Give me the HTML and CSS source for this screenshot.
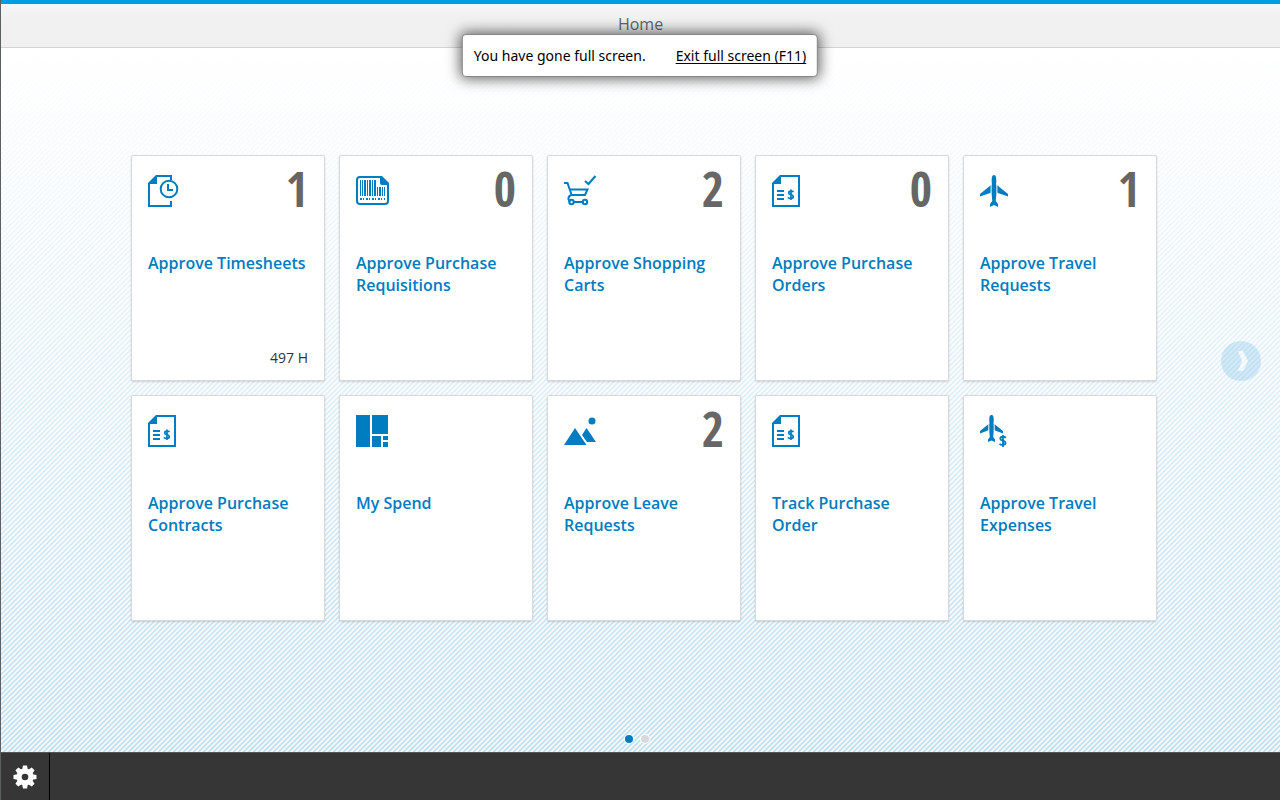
FILE: index.html
```html
<!DOCTYPE html>
<html lang="en">
<head>
<meta charset="utf-8">
<meta name="viewport" content="width=device-width, initial-scale=1">
<title>Home</title>
<link rel="stylesheet" href="styles.css">
</head>
<body>
<svg class="sprite" aria-hidden="true">
  <defs>
    <symbol id="icon-order" viewBox="0 0 34 34">
      <path d="M9 1H27V31H1V9" fill="none" stroke="currentColor" stroke-width="2"/>
      <path d="M0 9V8L8 0H9V9Z M5 15h7v2H5z M5 19h7v2H5z M5 23h7v2H5z" fill="currentColor"/>
      <path d="M21.500 17C20.500 15.800 16.700 15.700 16.700 18C16.700 20.300 21.300 19 21.300 21.700C21.300 24 17 23.800 16 22.400M19 14.500V25" fill="none" stroke="currentColor" stroke-width="1.700"/>
    </symbol>
    <symbol id="icon-plane" viewBox="0 0 34 34">
      <path d="M14 0C12 0 11.700 3 11.700 5V9.500L0 19V21.500L11.500 17.500L12.300 26L10 29V32L14 30L18 32V29L15.700 26L16.500 17.500L28 21.500V19L16.300 9.500V5C16.300 3 16 0 14 0Z" fill="currentColor"/>
      <path d="M11.100 8V18M16.900 8V18" stroke="#fff" stroke-width="1"/>
    </symbol>
  </defs>
</svg>

<header class="shell-header"><h1 class="shell-title">Home</h1></header>

<div class="notice" role="status">
  <span>You have gone full screen.</span>
  <a class="notice-link" href="#">Exit full screen (F11)</a>
</div>

<main class="launchpad">
  <div class="tiles">
    <a class="tile" href="#">
      <span class="tile-top">
        <svg class="icon" viewBox="0 0 34 34"><path d="M9 1H23V5M23 26V31H1V9" fill="none" stroke="currentColor" stroke-width="2"/><path d="M0 9V8L8 0H9V9Z" fill="currentColor"/><circle cx="21" cy="14" r="8.300" fill="#fff" stroke="currentColor" stroke-width="2"/><path d="M20 9V15H25" fill="none" stroke="currentColor" stroke-width="2"/></svg>
        <span class="count">1</span>
      </span>
      <span class="tile-title">Approve Timesheets</span>
      <span class="tile-info">497 H</span>
    </a>
    <a class="tile" href="#">
      <span class="tile-top">
        <svg class="icon" viewBox="0 0 34 34"><path d="M4 2H25L32 9V26Q32 29 29 29H4Q1 29 1 26V5Q1 2 4 2Z" fill="none" stroke="currentColor" stroke-width="2"/><path d="M24 1H26L33 8V10H26Q24 10 24 8Z M4 5h1v16h-1z M6 5h1v16h-1z M8 5h2v16h-2z M11 5h1v16h-1z M13 5h2v16h-2z M16 5h1v16h-1z M18 5h2v16h-2z M21 12h1v9h-1z M23 12h2v9h-2z M26 12h1v9h-1z M28 12h1v9h-1z" fill="currentColor"/><path d="M4 24H29" stroke="currentColor" stroke-width="2" stroke-dasharray="2 1 1 2"/></svg>
        <span class="count">0</span>
      </span>
      <span class="tile-title">Approve Purchase Requisitions</span>
    </a>
    <a class="tile" href="#">
      <span class="tile-top">
        <svg class="icon" viewBox="0 0 34 34"><path d="M0 8H3.500L8 21M5.500 14.500H23.500L21 20H7.500Q4 21 4.500 24.500L6 27" fill="none" stroke="currentColor" stroke-width="2"/><path d="M10 27H18M21 6L24.500 9L31.500 1" fill="none" stroke="currentColor" stroke-width="2"/><circle cx="7.500" cy="27" r="2.200" fill="none" stroke="currentColor" stroke-width="2"/><circle cx="21" cy="27" r="2.200" fill="none" stroke="currentColor" stroke-width="2"/></svg>
        <span class="count">2</span>
      </span>
      <span class="tile-title">Approve Shopping Carts</span>
    </a>
    <a class="tile" href="#">
      <span class="tile-top">
        <svg class="icon"><use href="#icon-order"/></svg>
        <span class="count">0</span>
      </span>
      <span class="tile-title">Approve Purchase Orders</span>
    </a>
    <a class="tile" href="#">
      <span class="tile-top">
        <svg class="icon"><use href="#icon-plane"/></svg>
        <span class="count">1</span>
      </span>
      <span class="tile-title">Approve Travel Requests</span>
    </a>
    <a class="tile" href="#">
      <span class="tile-top">
        <svg class="icon"><use href="#icon-order"/></svg>
      </span>
      <span class="tile-title">Approve Purchase Contracts</span>
    </a>
    <a class="tile" href="#">
      <span class="tile-top">
        <svg class="icon" viewBox="0 0 34 34"><path d="M0 0h14v32H0z M16 0h16v19H16z M16 21h9v11h-9z M27 21h5v4h-5z M27 27h5v5h-5z" fill="currentColor"/></svg>
      </span>
      <span class="tile-title">My Spend</span>
    </a>
    <a class="tile" href="#">
      <span class="tile-top">
        <svg class="icon" viewBox="0 0 34 34"><path d="M0 30L11 13L22.500 30Z M18 20L22.500 13L32 27H23Z" fill="currentColor"/><circle cx="28" cy="6" r="3.500" fill="currentColor"/></svg>
        <span class="count">2</span>
      </span>
      <span class="tile-title">Approve Leave Requests</span>
    </a>
    <a class="tile" href="#">
      <span class="tile-top">
        <svg class="icon"><use href="#icon-order"/></svg>
      </span>
      <span class="tile-title">Track Purchase Order</span>
    </a>
    <a class="tile" href="#">
      <span class="tile-top">
        <svg class="icon" viewBox="0 0 34 34"><path d="M11.500 0C9.700 0 9.300 2 9.300 4V8.500L0 16V18.500L9.200 15L9.800 22L8 24.500V27L11.500 25.500L15 27V24.500L13.200 22L13.800 15L23 18.500V16L13.700 8.500V4C13.700 2 13.300 0 11.500 0Z" fill="currentColor"/><path d="M8.800 7V16M14.200 7V16" stroke="#fff" stroke-width="1"/><path d="M25.800 22.800C24.500 21.300 20.300 21.200 20.300 23.700C20.300 26.300 25.500 25 25.500 28C25.500 30.500 20.800 30.300 19.500 28.700M23 20V32" fill="none" stroke="currentColor" stroke-width="1.800"/></svg>
      </span>
      <span class="tile-title">Approve Travel Expenses</span>
    </a>
  </div>
  <button class="next" type="button" aria-label="Next page"><svg class="next-icon" viewBox="0 0 40 40"><path d="M17 10H22L27 20L22 30H17L21 20Z" fill="#fff"/></svg></button>
  <nav class="pages" aria-label="Pages">
    <button class="dot dot-active" type="button" aria-label="Page 1"></button>
    <button class="dot" type="button" aria-label="Page 2"></button>
  </nav>
</main>

<footer class="toolbar">
  <button class="settings" type="button" aria-label="Settings"><svg class="gear" viewBox="0 0 24 24"><g fill="#fff"><circle cx="12" cy="12" r="8.500"/><path id="teeth" d="M10 .5h4l.8 4v15l-.8 4h-4l-.8-4v-15z"/><use href="#teeth" transform="rotate(45 12 12)"/><use href="#teeth" transform="rotate(90 12 12)"/><use href="#teeth" transform="rotate(135 12 12)"/></g><circle cx="12" cy="12" r="3.300" fill="#363636"/></svg></button>
</footer>
</body>
</html>
```
FILE: styles.css
```css
* {
  box-sizing: border-box;
}

body {
  margin: 0;
  min-height: 100vh;
  display: flex;
  flex-direction: column;
  border-left: 1px solid #5c5f62;
  background: #fff;
  font-family: "Open Sans", "Noto Sans", sans-serif;
}

button {
  padding: 0;
  border: 0;
  background: none;
  cursor: pointer;
}

.sprite {
  position: absolute;
  width: 0;
  height: 0;
}

.shell-header {
  height: 48px;
  border-top: 4px solid #009de0;
  border-bottom: 1px solid #d4d4d4;
  background: linear-gradient(#f6f6f6, #f1f1f1 30%, #f0f0f0);
}

.shell-title {
  margin: 0;
  font-size: 16px;
  font-weight: 400;
  line-height: 40px;
  text-align: center;
  color: #666;
}

.notice {
  position: absolute;
  z-index: 1;
  top: 34px;
  left: 50%;
  transform: translateX(-50%);
  display: flex;
  gap: 30px;
  padding: 1px 11px 0;
  border: 1px solid #868686;
  border-radius: 4px;
  background: #fff;
  box-shadow: 0 0 14px 2px rgba(0, 0, 0, 0.6);
  font-family: "Noto Sans", sans-serif;
  font-size: 14px;
  line-height: 40px;
  white-space: nowrap;
  color: #000;
}

.notice-link {
  color: #000;
  text-underline-offset: 2px;
}

.launchpad {
  position: relative;
  flex: 1;
  display: flex;
  flex-direction: column;
  align-items: center;
  padding: 107px 0 0 7px;
  background:
    linear-gradient(#fff, rgba(255, 255, 255, 0)),
    0 0 / 5px 5px linear-gradient(135deg, #c5e1f2 0 25%, #fff 35% 45%, #c5e1f2 55% 75%, #fff 85% 95%, #c5e1f2);
}

.tiles {
  display: grid;
  grid-template-columns: repeat(5, 194px);
  grid-auto-rows: 226px;
  gap: 14px;
}

.tile {
  display: flex;
  flex-direction: column;
  padding: 19px 16px 12px;
  border: 1px solid #d9d9d9;
  border-radius: 2px;
  background: #fff;
  box-shadow: 0 1px 2px rgba(0, 0, 0, 0.15);
  color: #007cc0;
  text-decoration: none;
}

.tile-top {
  display: flex;
  justify-content: space-between;
  height: 77px;
}

.icon {
  width: 34px;
  height: 34px;
}

.count {
  font-family: "Open Sans Condensed", "Liberation Sans Narrow", "Open Sans", sans-serif;
  font-size: 48px;
  font-weight: 700;
  line-height: 28px;
  color: #666;
}

.tile-title {
  font-size: 16px;
  font-weight: 600;
  line-height: 22px;
}

.tile-info {
  margin-top: auto;
  font-size: 14px;
  line-height: 20px;
  text-align: right;
  color: #333;
}

.next {
  position: absolute;
  top: 293px;
  right: 19px;
  width: 40px;
  height: 40px;
  border-radius: 50%;
  background: #3ba3dc;
  opacity: 0.2;
}

.next-icon {
  display: block;
}

.pages {
  display: flex;
  gap: 8px;
  margin-top: auto;
  padding: 0 14px 9px 0;
}

.dot {
  width: 8px;
  height: 8px;
  border-radius: 50%;
  background: #d9d9d9;
  box-shadow: 0 0 0 1px #fff;
}

.dot-active {
  background: #007cc0;
}

.toolbar {
  display: flex;
  height: 48px;
  border-top: 1px solid #555;
  background: #363636;
}

.settings {
  display: flex;
  align-items: center;
  justify-content: center;
  width: 49px;
  border-right: 1px solid #000;
}

.gear {
  width: 24px;
  height: 24px;
}
```
